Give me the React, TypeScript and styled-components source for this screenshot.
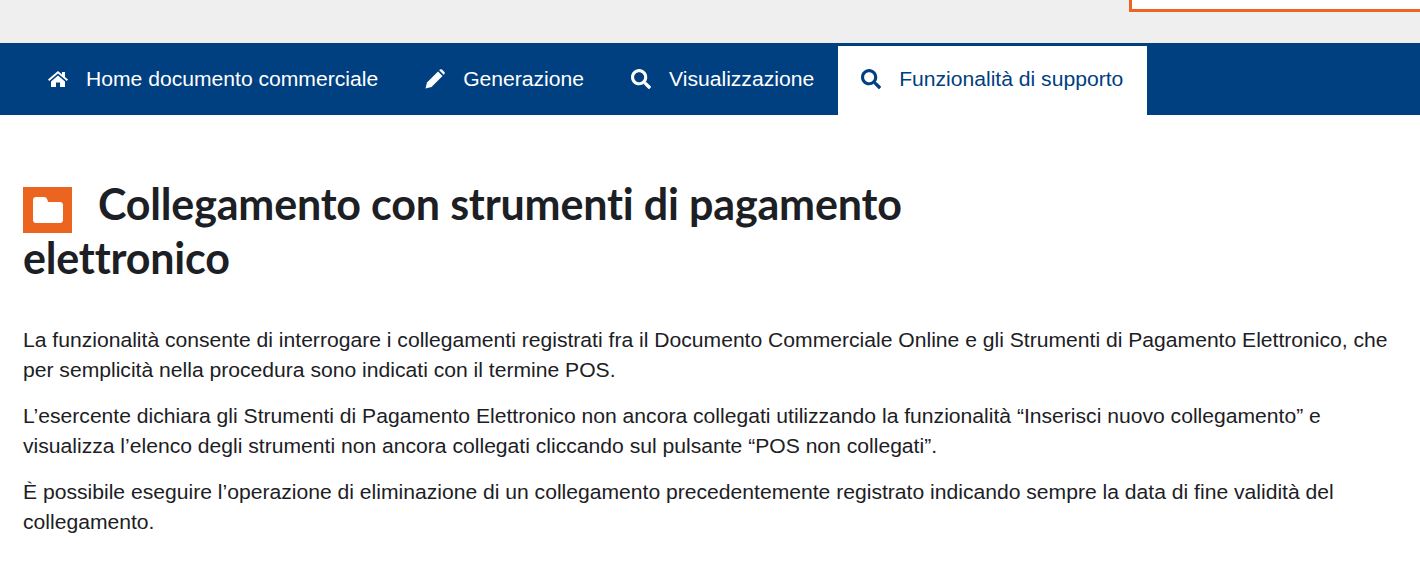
import React from 'react'
import styled, { createGlobalStyle } from 'styled-components'
import { FaSearch } from 'react-icons/fa'

const GlobalStyle = createGlobalStyle`
  html, body {
    margin: 0;
    padding: 0;
    background: #fff;
    font-family: "Liberation Sans", Arial, sans-serif;
    color: #1c2024;
  }
`

const TopBar = styled.header`
  height: 43px;
  background: #efefef;
  display: flex;
  justify-content: flex-end;
`

const TopBox = styled.div`
  box-sizing: border-box;
  width: 291px;
  height: 12px;
  background: #fff;
  border: 3px solid #ec6520;
  border-top: none;
  border-right: none;
`

const Nav = styled.nav`
  height: 72px;
  box-sizing: border-box;
  background: #004080;
  padding: 3px 0 0 25px;
  display: flex;
`

const NavItem = styled.a<{ $active?: boolean }>`
  display: flex;
  align-items: center;
  gap: 18px;
  padding: 0 24px 4px 23px;
  font-size: 21.12px;
  color: ${(p) => (p.$active ? '#004080' : '#fff')};
  background: ${(p) => (p.$active ? '#fff' : 'transparent')};
  svg {
    width: 20px;
    height: 20px;
    flex: none;
  }
`

const Main = styled.main`
  padding: 64px 23px 0 23px;
`

const Title = styled.h1`
  margin: 0 0 43px 0;
  width: 900px;
  font-family: "Lato", sans-serif;
  font-size: 43px;
  line-height: 49px;
  font-weight: 700;
  letter-spacing: -0.18px;
  font-variant-ligatures: none;
  color: #1c2024;
`

const TitleIcon = styled.span`
  display: inline-flex;
  align-items: center;
  justify-content: center;
  width: 49px;
  height: 46px;
  margin-right: 26px;
  background: #ec6520;
  color: #fff;
  vertical-align: -3px;
  svg {
    width: 30px;
    height: 26px;
  }
`

const Text = styled.p`
  margin: 0 0 16px 0;
  font-size: 21.12px;
  line-height: 30px;
`

const FolderIcon = () => (
  <svg viewBox="0 0 30 26" fill="currentColor">
    <path d="M3 0h8c1.5 0 2.4.7 3 2l1.2 3H27c1.7 0 3 1.3 3 3v15c0 1.7-1.3 3-3 3H3c-1.7 0-3-1.3-3-3V3c0-1.7 1.3-3 3-3z" />
  </svg>
)

const HomeIcon = () => (
  <svg viewBox="0 0 20 20" fill="currentColor">
    <path d="M0 10.5L10 2l4 3.4V3h3v5l3 2.5-1.2 1.5L10 4.6 1.2 12z" />
    <path d="M3 12.5l7-5.9 7 5.9V18h-5v-4.5H8V18H3z" />
  </svg>
)

const PencilIcon = () => (
  <svg viewBox="0 0 20 20" fill="currentColor">
    <path d="M.5 19.5L2 13.5 13 2.5 17.5 7 6.5 18z" />
    <path d="M14.2 1.3l.8-.8q1-.7 2 .1l2.4 2.4q.8 1 0 2l-.7.8z" />
  </svg>
)

const items = [
  { label: 'Home documento commerciale', icon: <HomeIcon /> },
  { label: 'Generazione', icon: <PencilIcon /> },
  { label: 'Visualizzazione', icon: <FaSearch /> },
  { label: 'Funzionalità di supporto', icon: <FaSearch />, active: true },
]

export default function App() {
  return (
    <>
      <GlobalStyle />
      <TopBar>
        <TopBox />
      </TopBar>
      <Nav>
        {items.map((i) => (
          <NavItem key={i.label} $active={i.active}>
            {i.icon}
            {i.label}
          </NavItem>
        ))}
      </Nav>
      <Main>
        <Title>
          <TitleIcon>
            <FolderIcon />
          </TitleIcon>
          Collegamento con strumenti di pagamento elettronico
        </Title>
        <Text>
          La funzionalità consente di interrogare i collegamenti registrati fra il Documento Commerciale Online e gli Strumenti di Pagamento Elettronico, che per semplicità nella procedura sono indicati con il termine POS.
        </Text>
        <Text>
          L’esercente dichiara gli Strumenti di Pagamento Elettronico non ancora collegati utilizzando la funzionalità “Inserisci nuovo collegamento” e visualizza l’elenco degli strumenti non ancora collegati cliccando sul pulsante “POS non collegati”.
        </Text>
        <Text>
          È possibile eseguire l’operazione di eliminazione di un collegamento precedentemente registrato indicando sempre la data di fine validità del collegamento.
        </Text>
      </Main>
    </>
  )
}
